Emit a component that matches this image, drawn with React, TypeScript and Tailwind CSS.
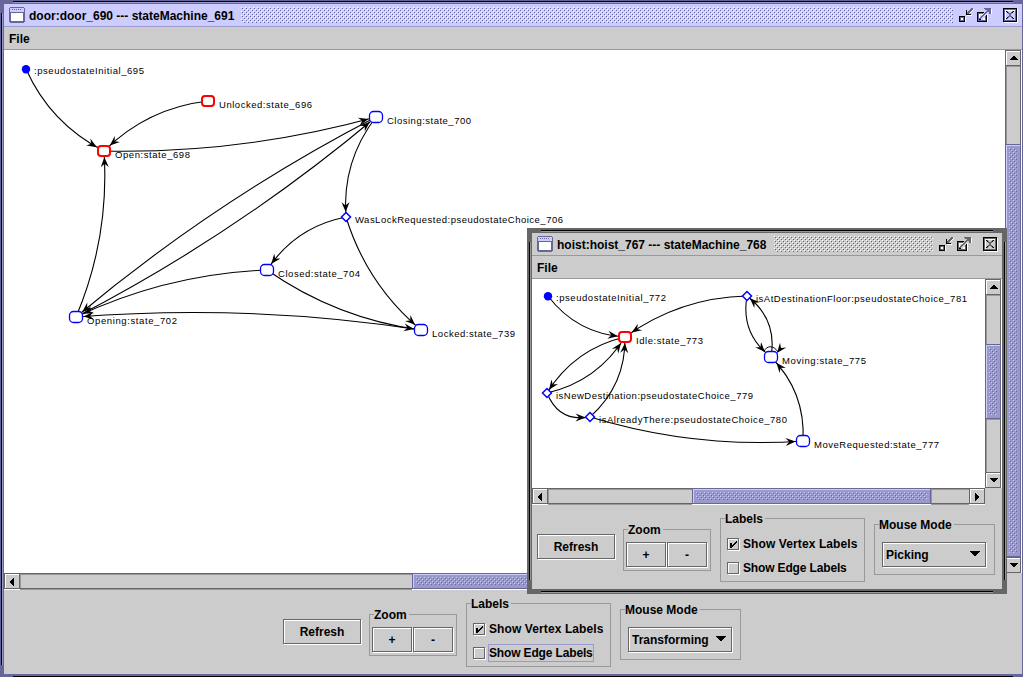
import React from "react";

type Kind = "state" | "active" | "choice" | "initial";
type Vertex = { id: string; kind: Kind; x: number; y: number; label: string; lx: number; ly: number; lw: number };
type Edge = [string, string];
type Graph = { vertices: Vertex[]; edges: Edge[]; loops?: string[] };

const doorGraph: Graph = {
  vertices: [
    { id: "init", kind: "initial", x: 26, y: 69, label: ":pseudostateInitial_695", lx: 34, ly: 74, lw: 110 },
    { id: "unlocked", kind: "active", x: 208, y: 101, label: "Unlocked:state_696", lx: 219, ly: 108, lw: 93 },
    { id: "closing", kind: "state", x: 376, y: 117, label: "Closing:state_700", lx: 387, ly: 124, lw: 84 },
    { id: "open", kind: "active", x: 104, y: 151, label: "Open:state_698", lx: 115, ly: 158, lw: 75 },
    { id: "was", kind: "choice", x: 346, y: 217, label: "WasLockRequested:pseudostateChoice_706", lx: 355, ly: 223, lw: 208 },
    { id: "closed", kind: "state", x: 267, y: 270, label: "Closed:state_704", lx: 278, ly: 277, lw: 82 },
    { id: "opening", kind: "state", x: 76, y: 317, label: "Opening:state_702", lx: 87, ly: 324, lw: 90 },
    { id: "locked", kind: "state", x: 421, y: 330, label: "Locked:state_739", lx: 432, ly: 337, lw: 83 },
  ],
  edges: [
    ["init", "open"],
    ["unlocked", "open"],
    ["open", "closing"],
    ["closing", "opening"],
    ["opening", "closing"],
    ["closing", "was"],
    ["was", "closed"],
    ["was", "locked"],
    ["closed", "locked"],
    ["closed", "opening"],
    ["locked", "opening"],
    ["opening", "open"],
  ],
};

const hoistGraph: Graph = {
  vertices: [
    { id: "init", kind: "initial", x: 548, y: 296, label: ":pseudostateInitial_772", lx: 556, ly: 301, lw: 110 },
    { id: "floor", kind: "choice", x: 747, y: 296, label: "isAtDestinationFloor:pseudostateChoice_781", lx: 756, ly: 302, lw: 211 },
    { id: "idle", kind: "active", x: 625, y: 337, label: "Idle:state_773", lx: 636, ly: 344, lw: 67 },
    { id: "moving", kind: "state", x: 771, y: 357, label: "Moving:state_775", lx: 782, ly: 364, lw: 84 },
    { id: "isnew", kind: "choice", x: 547, y: 393, label: "isNewDestination:pseudostateChoice_779", lx: 556, ly: 399, lw: 197 },
    { id: "there", kind: "choice", x: 590, y: 417, label: "isAlreadyThere:pseudostateChoice_780", lx: 599, ly: 423, lw: 188 },
    { id: "move", kind: "state", x: 803, y: 441, label: "MoveRequested:state_777", lx: 814, ly: 448, lw: 125 },
  ],
  edges: [
    ["init", "idle"],
    ["floor", "idle"],
    ["idle", "isnew"],
    ["isnew", "idle"],
    ["isnew", "there"],
    ["there", "idle"],
    ["there", "move"],
    ["move", "moving"],
    ["moving", "floor"],
    ["floor", "moving"],
  ],
  loops: ["moving"],
};

function inside(v: Vertex, x: number, y: number) {
  const dx = Math.abs(x - v.x);
  const dy = Math.abs(y - v.y);
  if (v.kind === "choice") return dx + dy < 5;
  if (v.kind === "initial") return dx * dx + dy * dy < 16;
  return dx < 7 && dy < 6 && dx + dy < 11;
}

function Arrow({ x, y, angle }: { x: number; y: number; angle: number }) {
  return <path d="M0 0L-10 4L-6.5 0L-10 -4Z" transform={`translate(${x} ${y}) rotate(${angle})`} fill="#000" />;
}

function EdgePath({ a, b }: { a: Vertex; b: Vertex }) {
  const dx = b.x - a.x;
  const dy = b.y - a.y;
  const len = Math.hypot(dx, dy);
  const cx = (a.x + b.x) / 2 - (dy / len) * 20;
  const cy = (a.y + b.y) / 2 + (dx / len) * 20;
  const at = (t: number) => [
    (1 - t) * (1 - t) * a.x + 2 * t * (1 - t) * cx + t * t * b.x,
    (1 - t) * (1 - t) * a.y + 2 * t * (1 - t) * cy + t * t * b.y,
  ];
  let t = 1;
  while (t > 0.5 && inside(b, at(t)[0], at(t)[1])) t -= 0.002;
  const [tx, ty] = at(t);
  const [px, py] = at(t - 9 / len);
  const angle = (Math.atan2(ty - py, tx - px) * 180) / Math.PI;
  return (
    <g>
      <path d={`M${a.x} ${a.y}Q${cx} ${cy} ${b.x} ${b.y}`} fill="none" stroke="#000" strokeWidth="1.1" />
      <Arrow x={tx} y={ty} angle={angle} />
    </g>
  );
}

function VertexShape({ v }: { v: Vertex }) {
  if (v.kind === "initial") return <circle cx={v.x} cy={v.y + 0.3} r="4.2" fill="#00f" />;
  if (v.kind === "choice")
    return <path d={`M${v.x} ${v.y - 4.5}l4.5 4.5l-4.5 4.5l-4.5 -4.5Z`} fill="#fff" stroke="#00f" strokeWidth="1.5" />;
  const red = v.kind === "active";
  return (
    <rect
      x={v.x - (red ? 6 : 6.5)}
      y={v.y - (red ? 5 : 5.5)}
      width={red ? 12 : 13}
      height={red ? 10 : 11}
      rx={red ? 3 : 4}
      fill="#fff"
      stroke={red ? "#f00" : "#00f"}
      strokeWidth={red ? 2 : 1.3}
    />
  );
}

function GraphCanvas({ graph, box }: { graph: Graph; box: string }) {
  const find = (id: string) => graph.vertices.find((v) => v.id === id) as Vertex;
  return (
    <svg viewBox={box} className="block h-full min-w-0 flex-1 bg-white" preserveAspectRatio="xMinYMin slice">
      {graph.edges.map(([a, b]) => (
        <EdgePath key={a + b} a={find(a)} b={find(b)} />
      ))}
      {(graph.loops || []).map((id) => {
        const v = find(id);
        return (
          <g key={id}>
            <path d={`M${v.x - 7} ${v.y - 5}C${v.x - 5} ${v.y - 12} ${v.x + 3} ${v.y - 12} ${v.x + 7} ${v.y - 5}`} fill="none" stroke="#000" />
            <Arrow x={v.x + 6} y={v.y - 4} angle={128} />
          </g>
        );
      })}
      {graph.vertices.map((v) => (
        <VertexShape key={v.id} v={v} />
      ))}
      {graph.vertices.map((v) => (
        <text key={v.id} x={v.lx} y={v.ly} textLength={v.lw} fontSize="9.5" fill="#000">
          {v.label}
        </text>
      ))}
    </svg>
  );
}

function Bumps({ id, light, dark, className }: { id: string; light: string; dark: string; className: string }) {
  return (
    <svg className={className} shapeRendering="crispEdges">
      <defs>
        <pattern id={id} width="4" height="4" patternUnits="userSpaceOnUse">
          <rect x="0" y="0" width="1" height="1" fill={light} />
          <rect x="2" y="2" width="1" height="1" fill={light} />
          <rect x="1" y="1" width="1" height="1" fill={dark} />
          <rect x="3" y="3" width="1" height="1" fill={dark} />
        </pattern>
      </defs>
      <rect width="100%" height="100%" fill={`url(#${id})`} />
    </svg>
  );
}

function WindowIcon() {
  return (
    <svg width="16" height="16" viewBox="0 0 16 16" shapeRendering="crispEdges">
      <path d="M1 0h14v1h1v14h-1v1h-14v-1h-1v-14h1Z" fill="#669" />
      <rect x="2" y="2" width="12" height="12" fill="#fff" />
      <rect x="1" y="1" width="14" height="4" fill="#ccf" />
      <path d="M3 2h1v1h-1zM5 2h1v1h-1zM7 2h1v1h-1zM9 2h1v1h-1zM11 2h1v1h-1zM1 5h14v1h-14z" fill="#669" />
    </svg>
  );
}

function IconifyIcon({ dark, light }: { dark: string; light: string }) {
  return (
    <svg width="16" height="16" viewBox="0 0 16 16" shapeRendering="crispEdges">
      <path d="M2 15h6v-5h-1v5zM3 11h2v2h-2zM9 8h5v1h-5zM15 2h1v1h-1zM14 3h1v1h-1zM13 4h1v1h-1zM12 5h1v1h-1z" fill={light} />
      <path d="M1 9h6v6h-6zM3 11v2h2v-2z" fillRule="evenodd" fill={dark} />
      <path d="M1 9h6v1h-6zM1 9h1v6h-1zM1 14h6v1h-6zM6 9h1v6h-1z" fill="#000" />
      <path d="M8 3h1v5h-1zM8 7h5v1h-5z" fill="#000" />
      <path d="M9 6h2v1h-2zM9 5h3v1h-3zM10 4h3v1h-3zM11 3h3v1h-3zM12 2h3v1h-3zM13 1h2v1h-2z" fill={dark} />
    </svg>
  );
}

function MaximizeIcon({ dark, light }: { dark: string; light: string }) {
  return (
    <svg width="16" height="16" viewBox="0 0 16 16" shapeRendering="crispEdges">
      <path d="M2 15h10v-8h-1v8zM3 7h5v1h-5zM3 7h1v4h-1zM15 2h1v5h-1zM7 11h2v2h-2z" fill={light} />
      <path d="M1 5h7v1h-7zM1 5h1v10h-1zM1 14h10v1h-10zM10 8h1v7h-1z" fill="#000" />
      <path d="M2 6h5v1h-5zM2 6h1v8h-1zM3 13h7v1h-7zM9 9h1v5h-1z" fill={dark} />
      <path d="M3 11h2v1h-2zM4 10h2v1h-2zM5 9h2v1h-2zM6 8h2v1h-2zM7 7h2v1h-2zM8 6h2v1h-2zM9 5h2v1h-2zM10 4h2v1h-2z" fill={dark} />
      <path d="M3 12h2v1h-2z" fill="#000" />
      <path d="M8 1h7v1h-7zM9 2h6v1h-6zM11 3h4v1h-4zM12 4h3v1h-3zM13 5h2v2h-2z" fill={dark} />
    </svg>
  );
}

function CloseIcon({ dark, light }: { dark: string; light: string }) {
  return (
    <svg width="16" height="16" viewBox="0 0 16 16" shapeRendering="crispEdges">
      <path d="M2 15h13v-13h1v14h-14zM3 3h10v1h-10zM3 3h1v10h-1z" fill={light} />
      <path d="M2 2h12v1h-12zM2 2h1v12h-1zM2 13h12v1h-12zM13 2h1v12h-1z" fill={dark} />
      <path d="M1 1h14v1h-14zM1 1h1v14h-1zM1 14h14v1h-14zM14 1h1v14h-1z" fill="#000" />
      <path d="M4 4h2v1h-2zM10 4h2v1h-2zM5 5h2v1h-2zM9 5h2v1h-2zM6 6h4v1h-4zM7 7h2v2h-2zM6 9h4v1h-4zM5 10h2v1h-2zM9 10h2v1h-2zM4 11h2v1h-2zM10 11h2v1h-2z" fill={dark} />
      <path d="M4 4h1v1h-1zM11 4h1v1h-1zM5 5h1v1h-1zM10 5h1v1h-1zM5 10h1v1h-1zM10 10h1v1h-1zM4 11h1v1h-1zM11 11h1v1h-1z" fill="#000" />
    </svg>
  );
}

const arrows = {
  up: "M8 6h2v1h1v1h1v1h1v1h-8v-1h1v-1h1v-1h1z",
  down: "M5 6h8v1h-1v1h-1v1h-1v1h-2v-1h-1v-1h-1v-1h-1z",
  left: "M6 8h1v-1h1v-1h1v-1h1v8h-1v-1h-1v-1h-1v-1h-1z",
  right: "M6 5h1v1h1v1h1v1h1v2h-1v1h-1v1h-1v1h-1z",
};

function ScrollButton({ dir }: { dir: keyof typeof arrows }) {
  return (
    <div className="h-4 w-4 shrink-0 border border-[#666] bg-[#ccc] shadow-[inset_1px_1px_0_#fff]">
      <svg width="16" height="16" viewBox="0 0 16 16" className="-m-px block" shapeRendering="crispEdges">
        <path d={arrows[dir]} fill="#000" />
      </svg>
    </div>
  );
}

function Thumb({ id, className }: { id: string; className: string }) {
  return (
    <div className={`flex shrink-0 border border-[#669] bg-[#99c] p-[3px] shadow-[inset_1px_1px_0_#ccf] ${className}`}>
      <Bumps id={id} light="#ccccff" dark="#666699" className="h-full w-full" />
    </div>
  );
}

function VScroll({ id, lead, thumb }: { id: string; lead: string; thumb: string }) {
  return (
    <div className="flex w-[17px] shrink-0 flex-col border-r border-white bg-[#ccc]">
      <ScrollButton dir="up" />
      <div className={`shrink-0 border-x border-[#666] shadow-[inset_1px_1px_0_#999] ${lead}`} />
      <Thumb id={id} className={`w-4 ${thumb}`} />
      <div className="min-h-0 flex-1 border-x border-[#666] shadow-[inset_1px_1px_0_#999]" />
      <ScrollButton dir="down" />
    </div>
  );
}

function HScroll({ id, lead, thumb }: { id: string; lead: string; thumb: string }) {
  return (
    <div className="mr-[17px] flex h-[17px] shrink-0 border-b border-white bg-[#ccc]">
      <ScrollButton dir="left" />
      <div className={`shrink-0 border-y border-[#666] shadow-[inset_1px_1px_0_#999,0_1px_0_#999] ${lead}`} />
      <Thumb id={id} className={`h-4 ${thumb}`} />
      <div className="min-w-0 flex-1 border-y border-[#666] shadow-[inset_1px_1px_0_#999,0_1px_0_#999]" />
      <ScrollButton dir="right" />
    </div>
  );
}

function Raised({ children, className }: { children: React.ReactNode; className: string }) {
  return (
    <button
      className={`mr-px mb-px flex h-[25px] items-center border border-[#666] leading-none font-bold shadow-[inset_1px_1px_0_#fff,1px_1px_0_#fff] ${className}`}
    >
      {children}
    </button>
  );
}

function Group({ title, titleWidth, className, children }: { title: string; titleWidth: string; className: string; children: React.ReactNode }) {
  return (
    <section className={`relative border border-[#999] ${className}`}>
      <h2 className={`absolute -top-[7px] left-1 bg-[#ccc] leading-[14px] whitespace-nowrap ${titleWidth}`}>{title}</h2>
      {children}
    </section>
  );
}

function Check({ checked, focused, label, spacing }: { checked?: boolean; focused?: boolean; label: string; spacing: string }) {
  return (
    <label className="flex h-6 items-center">
      <span className="mr-[3px] h-3 w-3 border border-[#666] shadow-[inset_1px_1px_0_#fff,1px_1px_0_#fff]">
        {checked && (
          <svg width="12" height="12" viewBox="0 0 12 12" className="-m-px block" shapeRendering="crispEdges">
            <path d="M3 5h2v5h-2zM5 7h1v2h-1zM6 6h1v2h-1zM7 5h1v2h-1zM8 4h1v2h-1zM9 3h1v2h-1z" fill="#000" />
          </svg>
        )}
      </span>
      <span className={`flex h-[18px] items-center border whitespace-nowrap ${spacing} ${focused ? "border-[#99c]" : "border-transparent"}`}>{label}</span>
    </label>
  );
}

function Controls({ mode, focused }: { mode: string; focused?: boolean }) {
  return (
    <div className="flex items-start">
      <Raised className="mt-4 w-[78px] justify-center">Refresh</Raised>
      <Group title="Zoom" titleWidth="w-[35px]" className="mt-[11px] ml-[7px] flex h-[42px] w-[88px] pt-3 pl-0.5">
        <Raised className="w-10 justify-center">+</Raised>
        <Raised className="w-10 justify-center">-</Raised>
      </Group>
      <Group title="Labels" titleWidth="w-10" className="ml-[9px] h-16 w-[145px] pt-[13px] pl-1.5">
        <Check checked label="Show Vertex Labels" spacing="tracking-[0.1px]" />
        <Check label="Show Edge Labels" spacing="tracking-[-0.15px]" focused={focused} />
      </Group>
      <Group title="Mouse Mode" titleWidth="w-[75px]" className="mt-1.5 ml-[9px] h-[51px] w-[121px] pt-[17px] pl-[7px]">
        <Raised className="w-[104px] justify-between pr-[5px] pl-[3px]">
          <span>{mode}</span>
          <svg width="10" height="5" viewBox="0 0 10 5" shapeRendering="crispEdges" className="mb-0.5">
            <path d="M0 0h10v1h-1v1h-1v1h-1v1h-1v1h-2v-1h-1v-1h-1v-1h-1v-1h-1z" fill="#000" />
          </svg>
        </Raised>
      </Group>
    </div>
  );
}

type WindowProps = {
  title: string;
  titleSpacing: string;
  active?: boolean;
  frame: string;
  bodyHeight: string;
  panel: string;
  graph: Graph;
  box: string;
  mode: string;
  v: [string, string];
  h: [string, string];
};

function InternalWindow(p: WindowProps) {
  const dark = p.active ? "#666699" : "#666666";
  const mark = p.active ? "border-[#669]" : "border-[#666]";
  const soft = p.active ? "bg-[#99c]" : "bg-[#999]";
  const key = p.active ? "door" : "hoist";
  return (
    <article className={`absolute flex flex-col border-[5px] bg-[#ccc] ${mark} ${p.frame}`}>
      <i className="absolute -top-[3px] right-[9px] left-[9px] h-px bg-black" />
      <i className={`absolute -top-0.5 right-[9px] left-[9px] h-px ${soft}`} />
      <i className="absolute right-[9px] -bottom-[3px] left-[9px] h-px bg-black" />
      <i className={`absolute right-[9px] -bottom-1 left-[9px] h-px ${soft}`} />
      <i className="absolute top-[9px] bottom-[9px] -left-[3px] w-px bg-black" />
      <i className={`absolute top-[9px] bottom-[9px] -left-0.5 w-px ${soft}`} />
      <i className="absolute top-[9px] -right-[3px] bottom-[9px] w-px bg-black" />
      <i className={`absolute top-[9px] -right-1 bottom-[9px] w-px ${soft}`} />
      <header className={`flex h-[23px] shrink-0 items-center border-b pr-1 pl-[5px] ${p.active ? "border-[#99c] bg-[#ccf]" : "border-[#999] bg-[#ccc]"}`}>
        <WindowIcon />
        <h1 className={`ml-1 shrink-0 pt-px whitespace-nowrap ${p.titleSpacing}`}>{p.title}</h1>
        <Bumps id={key + "-title"} light="#ffffff" dark={dark} className="h-4 min-w-0 flex-1" />
        <div className="ml-[5px] flex gap-0.5">
          <IconifyIcon dark={dark} light="#fff" />
          <MaximizeIcon dark={dark} light="#fff" />
          <span className="ml-2 block">
            <CloseIcon dark={dark} light="#fff" />
          </span>
        </div>
      </header>
      <nav className="flex h-[23px] shrink-0 items-center border-b border-[#999] pt-px pl-[5px]">File</nav>
      <div className={`flex shrink-0 ${p.bodyHeight}`}>
        <GraphCanvas graph={p.graph} box={p.box} />
        <VScroll id={key + "-v"} lead={p.v[0]} thumb={p.v[1]} />
      </div>
      <HScroll id={key + "-h"} lead={p.h[0]} thumb={p.h[1]} />
      <div className={p.panel}>
        <Controls mode={p.mode} focused={p.active} />
      </div>
    </article>
  );
}

export default function App() {
  return (
    <main className="relative h-[677px] w-[1023px] overflow-hidden bg-[#ccc] font-['Liberation_Sans',Arial,sans-serif] text-[12px] font-bold text-black [&_svg_text]:font-normal [&_h1]:font-bold [&_h2]:font-bold">
      <InternalWindow
        active
        title="door:door_690 --- stateMachine_691"
        titleSpacing="w-[212px]"
        frame="-top-px -left-px h-[680px] w-[1028px]"
        bodyHeight="h-[523px]"
        panel="pt-[13px] pl-[279px]"
        graph={doorGraph}
        box="4 50 1001 523"
        mode="Transforming"
        v={["h-[78px]", "h-[413px]"]}
        h={["w-[392px]", "w-[400px]"]}
      />
      <InternalWindow
        title="hoist:hoist_767 --- stateMachine_768"
        titleSpacing="w-[217px]"
        frame="top-[228px] left-[527px] h-[366px] w-[480px]"
        bodyHeight="h-[209px]"
        panel="pt-[13px] pl-[5px]"
        graph={hoistGraph}
        box="532 279 453 209"
        mode="Picking"
        v={["h-[49px]", "h-[75px]"]}
        h={["w-[144px]", "w-[239px]"]}
      />
    </main>
  );
}
